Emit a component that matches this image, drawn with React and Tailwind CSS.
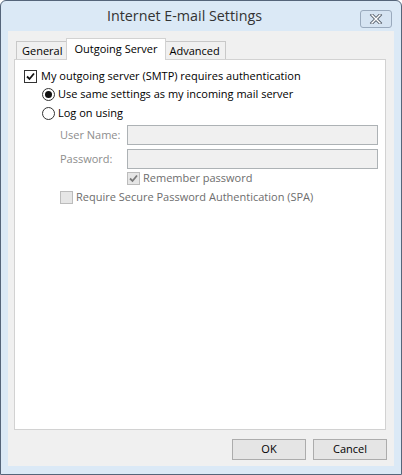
import React from 'react';

const font = { fontFamily: '"Open Sans", "Noto Sans", sans-serif' };

// small win8-style checkbox
const CheckBox = ({ checked, disabled }) => (
    <span
        className={`flex h-[13px] w-[13px] shrink-0 items-center justify-center border ${disabled ? 'border-[#bcbcbc] bg-[#e6e6e6]' : 'border-[#333333] bg-white'}`}
    >
        {checked && (
            <svg width="11" height="11" viewBox="0 0 11 11">
                <path d="M2 5.5 L4.5 8 L9 2.5" fill="none" stroke={disabled ? '#7a7a7a' : '#111111'} strokeWidth="1.8" />
            </svg>
        )}
    </span>
);

const Radio = ({ checked }) => (
    <span className="flex h-[13px] w-[13px] shrink-0 items-center justify-center rounded-full border border-[#333333] bg-white">
        {checked && <span className="h-[7px] w-[7px] rounded-full bg-[#111111]" />}
    </span>
);

const Tab = ({ label, active }) => (
    <div
        className={
            active
                ? 'relative z-10 -mb-px -mx-[2px] flex h-[22px] items-start border border-b-0 border-[#d2d2d2] bg-white px-[7px] pt-[2px] text-[11px] text-black'
                : 'flex h-[18px] items-center border border-b-0 border-[#c8c8c8] bg-[#f0f0f0] px-[5px] pt-[1px] text-[11px] text-black'
        }
    >
        {label}
    </div>
);

export default function App() {
    return (
        <div style={font} className="flex h-[475px] w-[402px] flex-col rounded-t-[6px] border border-[#55657a] bg-[#dbe9f6] select-none">
            {/* Title bar */}
            <div className="relative flex h-[30px] shrink-0 items-center justify-center pr-[33px]">
                <span className="text-[14.3px] text-[#333333]">Internet E-mail Settings</span>
                <div className="absolute right-[9px] top-[9px] flex h-[18px] w-[32px] items-center justify-center rounded-[3px] border border-[#9aaabd] bg-[#d6e4f2]">
                    <svg width="14" height="10" viewBox="0 0 14 10">
                        <path d="M3 1 L11 9 M11 1 L3 9" stroke="#5a6470" strokeWidth="3.2" strokeLinecap="square" />
                        <path d="M3 1 L11 9 M11 1 L3 9" stroke="#ffffff" strokeWidth="1.4" strokeLinecap="square" />
                    </svg>
                </div>
            </div>

            {/* Client area */}
            <div className="mx-[7px] mb-[8px] flex flex-1 flex-col bg-[#f0f0f0] px-[6px] pt-[7px]">
                <div className="flex items-end pl-[2px]">
                    <Tab label="General" />
                    <Tab label="Outgoing Server" active />
                    <Tab label="Advanced" />
                </div>

                <div className="flex h-[371px] w-[372px] flex-col border border-[#d2d2d2] bg-white pl-[9px] pt-[7px] text-[11px] text-black">
                    <div className="flex h-[18px] items-center gap-[4px]">
                        <CheckBox checked />
                        <span>My outgoing server (SMTP) requires authentication</span>
                    </div>
                    <div className="ml-[18px] flex h-[18px] items-center gap-[3px]">
                        <Radio checked />
                        <span>Use same settings as my incoming mail server</span>
                    </div>
                    <div className="ml-[18px] mt-px flex h-[18px] items-center gap-[3px]">
                        <Radio />
                        <span>Log on using</span>
                    </div>

                    <div className="ml-[36px] mt-[3px] flex h-[20px] items-center">
                        <span className="w-[67px] text-[#8d8d8d]">User Name:</span>
                        <div className="h-[20px] w-[251px] border border-[#adb2b5] bg-[#f0f0f0]" />
                    </div>
                    <div className="ml-[36px] mt-[4px] flex h-[20px] items-center">
                        <span className="w-[67px] text-[#8d8d8d]">Password:</span>
                        <div className="h-[20px] w-[251px] border border-[#adb2b5] bg-[#f0f0f0]" />
                    </div>
                    <div className="ml-[103px] flex h-[18px] items-center gap-[3px]">
                        <CheckBox checked disabled />
                        <span className="text-[#6d6d6d]">Remember password</span>
                    </div>
                    <div className="ml-[36px] mt-px flex h-[18px] items-center gap-[3px]">
                        <CheckBox disabled />
                        <span className="text-[#6d6d6d]">Require Secure Password Authentication (SPA)</span>
                    </div>
                </div>

                <div className="mt-[9px] flex justify-end gap-[7px] pr-px">
                    <button className="flex h-[21px] w-[74px] items-center justify-center border border-[#acacac] bg-[#e5e5e5] text-[11px] text-black">
                        OK
                    </button>
                    <button className="flex h-[21px] w-[74px] items-center justify-center border border-[#acacac] bg-[#e5e5e5] text-[11px] text-black">
                        Cancel
                    </button>
                </div>
            </div>
        </div>
    );
}
